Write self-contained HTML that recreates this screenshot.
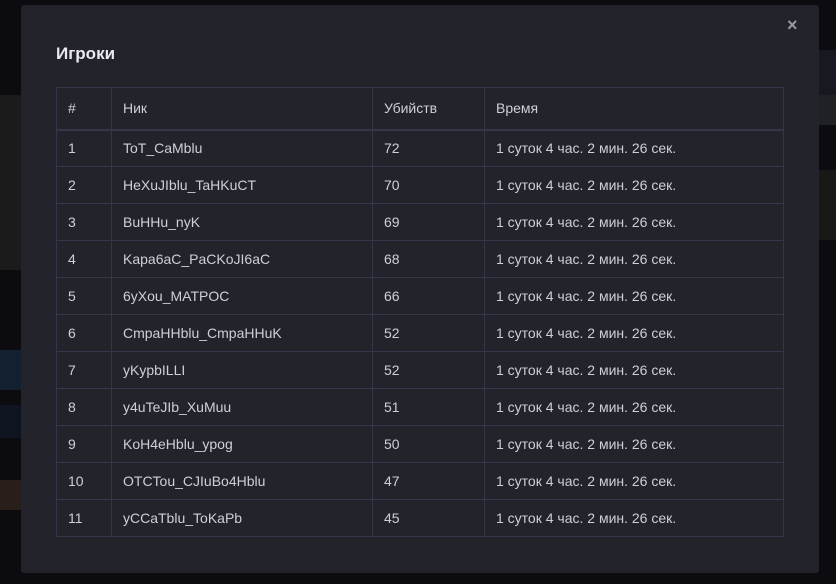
<!DOCTYPE html>
<html><head><meta charset="utf-8"><style>
body{margin:0;width:836px;height:584px;background:#0c0c10;position:relative;overflow:hidden;font-family:"Liberation Sans",sans-serif}
.bg{position:absolute}
.modal{position:absolute;left:21px;top:5px;width:798px;height:568px;background:#23232c;border-radius:3px}
h1{position:absolute;left:35px;top:39px;margin:0;font-size:17px;font-weight:bold;color:#e8e8ee}
.x{position:absolute;left:766px;top:10px;color:#9a9aa2;font-size:18px;font-weight:bold}
table{position:absolute;left:35px;top:82px;border-collapse:collapse;font-size:14px;color:#cfcfd6}
td{border:1px solid #36364a;height:37px;padding:0 0 0 11px;box-sizing:border-box}
tr.h td{height:42px;border-bottom:2px solid #36364a}
</style></head><body>
<div class="bg" style="left:0;top:95px;width:21px;height:175px;background:#1c1b1c"></div>
<div class="bg" style="left:0;top:350px;width:21px;height:40px;background:#132030"></div>
<div class="bg" style="left:0;top:405px;width:21px;height:33px;background:#0f1520"></div>
<div class="bg" style="left:0;top:480px;width:21px;height:30px;background:#281e1a"></div>
<div class="bg" style="left:819px;top:50px;width:17px;height:45px;background:#181820"></div>
<div class="bg" style="left:819px;top:95px;width:17px;height:30px;background:#1e2224"></div>
<div class="bg" style="left:819px;top:170px;width:17px;height:70px;background:#1a1816"></div>
<div class="modal">
<h1>Игроки</h1>
<div class="x">×</div>
<table>
<colgroup><col style="width:55px"><col style="width:261px"><col style="width:112px"><col style="width:299px"></colgroup>
<tr class="h"><td>#</td><td>Ник</td><td>Убийств</td><td>Время</td></tr>
<tr><td>1</td><td>ToT_CaMblu</td><td>72</td><td>1 суток 4 час. 2 мин. 26 сек.</td></tr>
<tr><td>2</td><td>HeXuJIblu_TaHKuCT</td><td>70</td><td>1 суток 4 час. 2 мин. 26 сек.</td></tr>
<tr><td>3</td><td>BuHHu_nyK</td><td>69</td><td>1 суток 4 час. 2 мин. 26 сек.</td></tr>
<tr><td>4</td><td>Kapa6aC_PaCKoJI6aC</td><td>68</td><td>1 суток 4 час. 2 мин. 26 сек.</td></tr>
<tr><td>5</td><td>6yXou_MATPOC</td><td>66</td><td>1 суток 4 час. 2 мин. 26 сек.</td></tr>
<tr><td>6</td><td>CmpaHHblu_CmpaHHuK</td><td>52</td><td>1 суток 4 час. 2 мин. 26 сек.</td></tr>
<tr><td>7</td><td>yKypbILLI</td><td>52</td><td>1 суток 4 час. 2 мин. 26 сек.</td></tr>
<tr><td>8</td><td>y4uTeJIb_XuMuu</td><td>51</td><td>1 суток 4 час. 2 мин. 26 сек.</td></tr>
<tr><td>9</td><td>KoH4eHblu_ypog</td><td>50</td><td>1 суток 4 час. 2 мин. 26 сек.</td></tr>
<tr><td>10</td><td>OTCTou_CJIuBo4Hblu</td><td>47</td><td>1 суток 4 час. 2 мин. 26 сек.</td></tr>
<tr><td>11</td><td>yCCaTblu_ToKaPb</td><td>45</td><td>1 суток 4 час. 2 мин. 26 сек.</td></tr>
</table>
</div>
</body></html>
